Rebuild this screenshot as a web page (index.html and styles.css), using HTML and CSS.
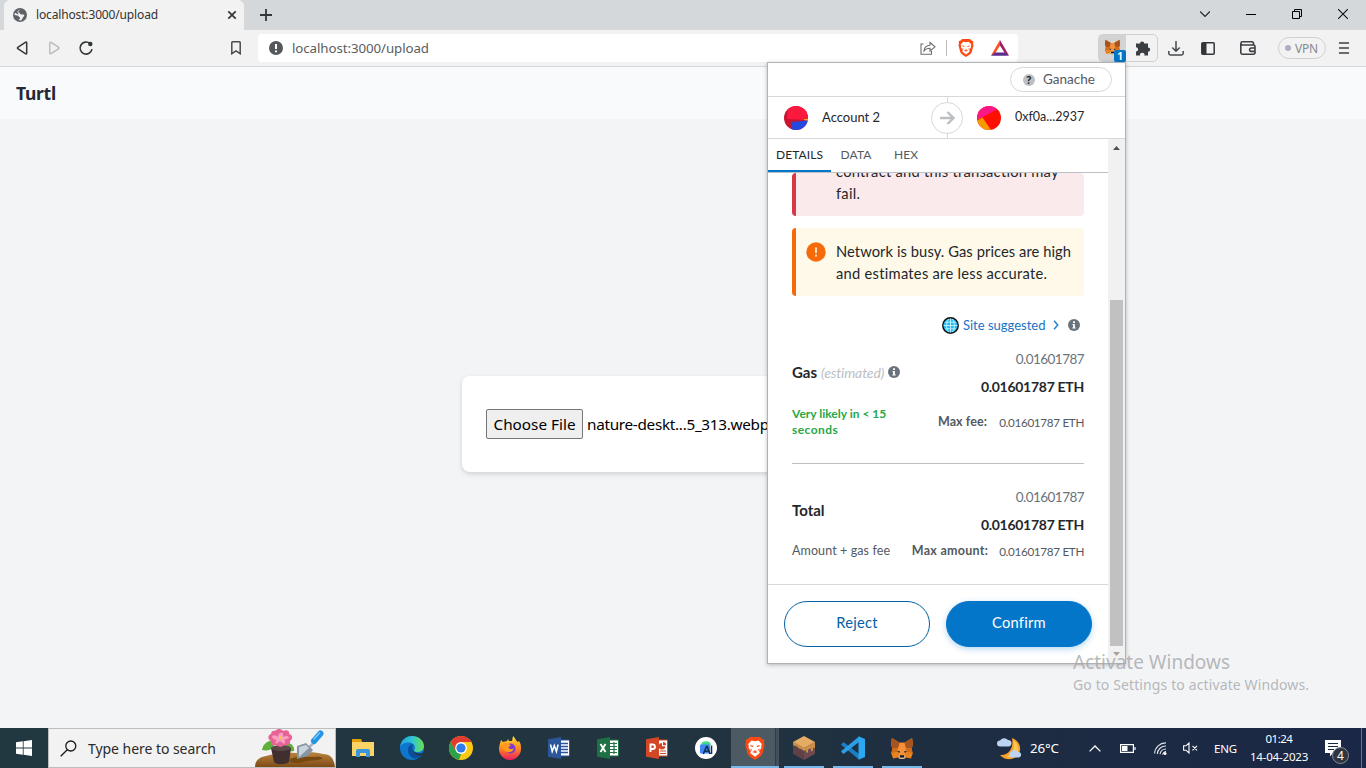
FILE: index.html
```html
<!DOCTYPE html>
<html lang="en">
<head>
<meta charset="utf-8">
<title>Turtl</title>
<link rel="stylesheet" href="styles.css">
</head>
<body>
<svg class="defs" width="0" height="0">
  <symbol id="fox" viewBox="0 0 24 24">
    <path fill="#e8821e" d="M1.500 1l8 5h5l8-5 .9 6-1.300 6 1.200 4-2 5.500-5-1.200-2 1.700H9.700l-2-1.700-5 1.200-2-5.500 1.200-4L.6 7z"/>
    <path fill="#a85420" d="M1.500 1L9.800 6 8 11.500l-6 .8L.6 7zM22.500 1l-8.300 5L16 11.500l6 .8L23.400 7z"/>
    <path fill="#f4903a" d="M9.500 6h5l1.500 6-1 7H9l-1-7z"/>
    <path fill="#d66b16" d="M2 12.300l6-.8-1.300 3.800-5.700 1.500zM22 12.300l-6-.8 1.300 3.800 5.700 1.500z"/>
    <path fill="#233447" d="M6.500 14.500l3.500.3-1 1.900zM17.500 14.500l-3.500.3 1 1.900z"/>
    <path fill="#d7c1b3" d="M8 20l1.800-.7h4.400L16 20l-1.600 2.700H9.700z"/>
    <path fill="#1c1614" d="M10 19h4l.5 2.300h-5z"/>
  </symbol>
  <symbol id="lion" viewBox="0 0 20 23">
    <path fill="#fb4a14" d="M5 0h10l2 2 2.300.8L19 6l.6 2-2.300 9-2.300 2.800L10 23l-5-3.200L2.700 17 .4 8 1 6 .7 2.800 3 2z"/>
    <path fill="#fff" d="M6.500 3.600l3.500.6 3.500-.6 3.300 3.500-.6 1.900.2 2-2.400 3 .8 2L10 19.800 5.200 16l.8-2-2.400-3 .2-2-.6-1.900z"/>
    <path fill="#fb4a14" d="M4.800 8.200l3.700.6-.5 1.200-2.200-.4zM15.200 8.200l-3.700.6.5 1.200 2.200-.4zM8.700 13.500h2.600L10 14.800zM7 15l3-1 3 1-3 1zM5.500 11.500l1.500 1-1 1.500zM14.500 11.500l-1.500 1 1 1.500z"/>
  </symbol>
  <symbol id="info" viewBox="0 0 12 12">
    <circle cx="6" cy="6" r="6" fill="#6a737d"/><path fill="#fff" d="M5.100 2.300h1.900v1.700H5.100zM4.500 4.900h2.400v3.500h.8v1H4.300v-1h.8V5.900h-.6z"/>
  </symbol>
</svg>

<header class="tabstrip">
  <div class="tab">
    <svg width="14" height="14" viewBox="0 0 14 14"><circle cx="7" cy="7" r="7" fill="#5f6368"/><path fill="#f2f2f2" d="M7.500 1.500c-1 .7-2.200 1-2.200 2.200 0 1 1.500.8 1.700 1.700.2 1 1.200 1.100 2.500 1.100 1.200 0 2 .3 1.700 1.300-.4 1.200-1.600 1.500-1.700 2.700L8 12.400c-1 .1-2-.1-2.400-.3.300-.8 1.600-.7 1.600-1.800 0-1-1-1-1.400-1.800C5.300 7.300 3.700 7.600 1.500 7c0-.8.100-1.500.4-2 1.700.2 2 1.200 3.300 1.200.6 0 .4-.7-.2-1.300-.8-.8-.7-2.200 1-2.900z"/></svg>
    <span class="tab-title">localhost:3000/upload</span>
    <svg class="tab-close" width="10" height="10" viewBox="0 0 10 10"><path d="M1.300 1.300l7.400 7.400M8.700 1.300L1.300 8.700" stroke="#333638" stroke-width="1.700"/></svg>
  </div>
  <svg class="plus" width="12" height="12" viewBox="0 0 12 12"><path d="M6 0v12M0 6h12" stroke="#333638" stroke-width="1.800"/></svg>
  <div class="winctl">
    <svg width="10" height="10" viewBox="0 0 10 10"><path d="M0 2.500l5 5 5-5" fill="none" stroke="#222" stroke-width="1.200"/></svg>
    <svg width="10" height="10" viewBox="0 0 10 10"><path d="M0 5.500h10" stroke="#000"/></svg>
    <svg width="10" height="10" viewBox="0 0 10 10"><path d="M.5 2.500h7v7h-7zM2.500 2.500v-2h7v7h-2" fill="none" stroke="#000"/></svg>
    <svg width="10" height="10" viewBox="0 0 10 10"><path d="M0 0l10 10M10 0L0 10" stroke="#111" stroke-width="1.100"/></svg>
  </div>
</header>

<nav class="toolbar">
  <div class="navbtns">
    <svg width="16" height="16" viewBox="0 0 16 16"><path d="M12.700 2.800v10.400a.7.7 0 0 1-1 .6L3.800 8.600a.7.7 0 0 1 0-1.200l7.900-5.200a.7.7 0 0 1 1 .6z" fill="none" stroke="#333638" stroke-width="1.500"/></svg>
    <svg width="16" height="16" viewBox="0 0 16 16"><path d="M3.800 2.800v10.400a.7.7 0 0 0 1 .6l7.900-5.200a.7.7 0 0 0 0-1.200L4.800 2.200a.7.7 0 0 0-1 .6z" fill="none" stroke="#b9babc" stroke-width="1.400"/></svg>
    <svg width="16" height="16" viewBox="0 0 16 16"><path d="M12 3.500A6 6 0 1 0 14 9.200" fill="none" stroke="#333638" stroke-width="1.600"/><circle cx="12.300" cy="4" r="2.200" fill="#333638"/></svg>
  </div>
  <svg class="bookmark" width="10" height="14" viewBox="0 0 10 14"><path d="M.8 1.500a.7.700 0 0 1 .7-.7h7a.7.700 0 0 1 .7.700v11.200L5 9.800.8 12.700z" fill="none" stroke="#4a4d50" stroke-width="1.500"/></svg>
  <div class="omnibox">
    <svg width="14" height="14" viewBox="0 0 14 14"><circle cx="7" cy="7" r="7" fill="#55595e"/><path d="M7 3v5M7 9.400v1.800" stroke="#fff" stroke-width="2"/></svg>
    <span class="url">localhost:3000/upload</span>
    <svg class="share" width="16" height="14" viewBox="0 0 16 14"><path d="M3.500 3H1v10.300h10.500V10M4 10c.3-3.500 2.500-5.700 6-5.800V1.500L15 5.800l-5 4.200V7.300C7.500 7.300 5.500 8 4 10z" fill="none" stroke="#6b6e72" stroke-width="1.100"/></svg>
    <i class="sep"></i>
    <svg class="brave" width="16" height="18"><use href="#lion"/></svg>
    <svg width="18" height="16" viewBox="0 0 18 16"><path fill="#ff4f1c" d="M9 0v5.500L4 13.500 0 15.500z"/><path fill="#9e1f63" d="M9 0l9 15.500-4-2L9 5.500z"/><path fill="#5b2d90" d="M0 15.700l4-3.200h10l4 3.200z"/></svg>
  </div>
  <div class="exts">
    <div class="ext on"><svg width="17" height="16"><use href="#fox"/></svg><b class="badge">1</b></div>
    <div class="ext"><svg width="16" height="16" viewBox="0 0 16 16"><path fill="#3a3d41" d="M1 3.500h4a2.100 2.100 0 1 1 4.200 0h3.800v3.900a2.200 2.200 0 1 1 0 4.400v3.700H9.400a2.200 2.200 0 1 0-4.300 0H1v-4a2.100 2.100 0 1 0 0-4.200z"/></svg></div>
  </div>
  <svg class="dl" width="16" height="15" viewBox="0 0 16 15"><path d="M8 0v10M4.300 6.500L8 10.200l3.700-3.700M.8 10v2.300a1.700 1.700 0 0 0 1.700 1.700h11a1.700 1.700 0 0 0 1.700-1.700V10" fill="none" stroke="#45484c" stroke-width="1.500"/></svg>
  <svg class="side" width="14" height="13" viewBox="0 0 14 13"><rect x=".8" y=".8" width="12.400" height="11.400" rx="1" fill="none" stroke="#333638" stroke-width="1.500"/><path fill="#333638" d="M1 1h4.500v11H1z"/></svg>
  <svg class="wallet" width="16" height="14" viewBox="0 0 16 14"><path d="M13.500 3.800V2.500A1.700 1.700 0 0 0 11.800.8H2.500a1.600 1.600 0 0 0 0 3.200h11A1.500 1.500 0 0 1 15 5.500v6.200a1.500 1.500 0 0 1-1.500 1.500H2.500A1.600 1.600 0 0 1 .8 11.600V2.500M15 7h-3.700a1.700 1.700 0 0 0 0 3.400H15" fill="none" stroke="#3c3f43" stroke-width="1.600"/></svg>
  <div class="vpn"><i></i><span>VPN</span></div>
  <svg class="menu" width="10" height="12" viewBox="0 0 10 12"><path d="M0 1h10M0 6h10M0 11h10" stroke="#3c3f43" stroke-width="1.600"/></svg>
</nav>

<main class="page">
  <div class="brand">Turtl</div>
  <section class="card">
    <button class="choose">Choose File</button>
    <span class="filename">nature-deskt...5_313.webp</span>
  </section>
</main>

<aside class="popup">
  <div class="network">
    <div class="pill"><svg width="12" height="12" viewBox="0 0 12 12"><circle cx="6" cy="6" r="6" fill="#bbc0c5"/></svg><b>?</b><span>Ganache</span></div>
  </div>
  <div class="parties">
    <svg width="24" height="24" viewBox="0 0 24 24"><clipPath id="c"><circle cx="12" cy="12" r="12"/></clipPath><g clip-path="url(#c)"><path fill="#c8142f" d="M0 0h24v24H0z"/><path fill="#fc1940" d="M4 0h20v14L3 13z"/><path fill="#f3c20c" d="M19 13.500l5-.8v2.500z"/><path fill="#2448e0" d="M7 16l17-1.500V24H8z"/></g></svg>
    <span class="from">Account 2</span>
    <div class="arrow"><svg width="15" height="14" viewBox="0 0 15 14"><path d="M0 7h13M7.500 1l6 6-6 6" fill="none" stroke="#bbc0c5" stroke-width="2.400"/></svg></div>
    <svg width="24" height="24" viewBox="0 0 24 24"><g clip-path="url(#c)"><path fill="#ff0f00" d="M0 0h24v24H0z"/><path fill="#fb1886" d="M0 0h20l-1 4L0 14z"/><path fill="#f59a00" d="M0 14.500l5.500-3L14 24H0z"/></g></svg>
    <span class="to">0xf0a...2937</span>
  </div>
  <div class="body">
    <div class="column">
      <div class="tabs">
        <span class="active">DETAILS</span>
        <span>DATA</span>
        <span>HEX</span>
      </div>
      <div class="content">
        <div class="alert danger"><p>contract and this transaction may<br>fail.</p></div>
        <div class="alert warn">
          <svg width="20" height="20" viewBox="0 0 20 20"><circle cx="10" cy="10" r="9.700" fill="#f66a0a"/><path d="M10 5.500v5.500M10 12.500v2" stroke="#fff" stroke-width="1.500"/></svg>
          <p>Network is busy. Gas prices are high<br><span class="second">and estimates are less accurate.</span></p>
        </div>
        <div class="site">
          <svg width="17" height="17" viewBox="0 0 17 17"><circle cx="8.500" cy="8.500" r="7.700" fill="#25bdf2" stroke="#111" stroke-width="1.500"/><path d="M1.500 8.500h14M8.500 1.500v14M3 5.200h11M3 11.800h11M6.500 2c-2.500 4-2.500 9 0 13M10.500 2c2.500 4 2.500 9 0 13" fill="none" stroke="#d5f5ff" stroke-width=".8"/></svg>
          <span>Site suggested</span>
          <svg class="chev" width="6" height="10" viewBox="0 0 6 10"><path d="M1 .8L4.800 5 1 9.200" fill="none" stroke="#1a7fd0" stroke-width="1.400"/></svg>
          <svg width="12" height="12"><use href="#info"/></svg>
        </div>
        <div class="row">
          <div class="label"><b>Gas</b><em>(estimated)</em><svg width="12" height="12"><use href="#info"/></svg></div>
          <div class="values"><span>0.01601787</span><b>0.01601787 ETH</b></div>
        </div>
        <div class="sub">
          <div class="likely">Very likely in &lt; 15<br><span>seconds</span></div>
          <div class="max"><b>Max fee:</b><span>0.01601787 ETH</span></div>
        </div>
        <hr>
        <div class="row total">
          <div class="label"><b>Total</b></div>
          <div class="values"><span>0.01601787</span><b>0.01601787 ETH</b></div>
        </div>
        <div class="sub last">
          <div class="note">Amount + gas fee</div>
          <div class="max amount"><b>Max amount:</b><span>0.01601787 ETH</span></div>
        </div>
      </div>
      <footer class="actions">
        <button class="reject">Reject</button>
        <button class="confirm">Confirm</button>
      </footer>
    </div>
    <div class="scroll"><svg width="7" height="4" viewBox="0 0 7 4"><path d="M0 4l3.500-4L7 4z" fill="#505050"/></svg><i></i><svg width="7" height="4" viewBox="0 0 7 4"><path d="M0 0l3.500 4L7 0z" fill="#a3a3a3"/></svg></div>
  </div>
</aside>

<div class="watermark"><h2>Activate Windows</h2><p>Go to Settings to activate Windows.</p></div>

<footer class="taskbar">
  <div class="start"><svg width="16" height="16" viewBox="0 0 16 16"><path fill="#fff" d="M0 2.200L6.800 1.300v6.300H0zM7.600 1.200L16 0v7.600H7.600zM0 8.400h6.800v6.300L0 13.800zM7.600 8.400H16V16l-8.400-1.200z"/></svg></div>
  <div class="search">
    <svg width="17" height="17" viewBox="0 0 17 17"><circle cx="10.800" cy="6" r="5" fill="none" stroke="#1b1b1b" stroke-width="1.300"/><path d="M7.300 9.700L.7 16.300" stroke="#1b1b1b" stroke-width="1.300"/></svg>
    <span>Type here to search</span>
    <svg class="garden" width="80" height="38" viewBox="0 0 80 38">
      <defs><linearGradient id="soil" x2="0" y2="1"><stop stop-color="#bb8440"/><stop offset="1" stop-color="#7d4b16"/></linearGradient></defs>
      <path fill="url(#soil)" d="M0 38c0-6 4-10 11-11 8-3 20-4 30-3 12-1 20-1 27 1 8 0 11 5 12 13z"/>
      <path fill="#77490f" d="M35 30c7-3 14-3 20-2 5 0 10-1 13 1-4 3-10 2-15 3-7 2-13 3-18 1z"/>
      <path fill="#5fb03a" d="M7 21c1-6 5-9 11-10 3 6-1 12-11 10zM30 14c6-1 10 4 9 8-6 1-10-1-9-8z"/>
      <path fill="#3f302f" d="M16 19h20l-2 14c-4 3-12 3-15 0z"/><ellipse cx="26" cy="19" rx="10" ry="3" fill="#5b4746"/>
      <path fill="#ea6398" d="M20 2c3-3 7-2 8 0 4-2 7 0 6 3 4 1 4 5 1 7 1 4-4 5-6 4-2 3-6 2-7 0-4 1-7 0-6-4-4-2-3-6 0-7 0-2 2-4 4-3z"/><path fill="#f8a0c0" d="M17 7c3-1 5 0 6 1 0-3 2-5 5-4l0 4c3-2 6-1 6 1l-5 2c2 1 1 3 0 4l-4-3-4 3c-1-2 0-3 1-4-3 0-5-2-5-4z"/><circle cx="25.500" cy="9" r="1.800" fill="#f5c25a"/>
      <path d="M52 20l10-9" stroke="#a9b6c1" stroke-width="2.500"/><path fill="#8796a2" d="M42 17l9-3 7 7-5 6-11 3z"/><path fill="#c8d3dc" d="M44 18l7-2 3 3-10 9z"/>
      <path d="M59 12L65.500 4.500" stroke="#2494e4" stroke-width="6" stroke-linecap="round"/><path d="M59 10L64.500 4" stroke="#7fc9fa" stroke-width="1.500" stroke-linecap="round"/>
    </svg>
  </div>
  <div class="apps">
    <div class="app"><svg width="22" height="20" viewBox="0 0 22 20"><path fill="#e3a008" d="M0 1h9l1 2v4H0z"/><path fill="#fcd365" d="M0 4h22v14H0z"/><path fill="#3a96dd" d="M4 19v-6a2 2 0 0 1 2-2h10a2 2 0 0 1 2 2v6h-4v-4H8v4z"/></svg></div>
    <div class="app"><svg width="24" height="24" viewBox="0 0 24 24"><defs><linearGradient id="e1"><stop stop-color="#1ca3e0"/><stop offset=".5" stop-color="#30c5d2"/><stop offset="1" stop-color="#6be04f"/></linearGradient></defs><circle cx="12" cy="12" r="12" fill="#0f76cf"/><path fill="#0b4f9c" d="M8 14c0-4 3-6 5-6-2 3-1 9 8 10 1 0 2-.5 1 1-4 6-14 4-14-5z"/><path fill="url(#e1)" d="M0 11C1 4 6 0 12 0c7 0 12 5 12 10 0 4-3 6-7 6-2 0-3-.6-3-1.500 0-.8 1-1.300 1-3C15 8.500 12 6.500 9 6.500c-5 0-8 2-9 4.500z"/><path fill="#223640" d="M13.500 14.500c1 3 5 4 11 1.500l-2.200 3.500c-4 .5-9-1-8.800-5z"/></svg></div>
    <div class="app"><svg width="24" height="24" viewBox="0 0 24 24"><circle cx="12" cy="12" r="12" fill="#f9c913"/><path fill="#2ca14b" d="M1.600 6L7 15l5 3-2 5.800A12 12 0 0 1 1.600 6z"/><path fill="#e33b2e" d="M1.600 6A12 12 0 0 1 22.400 6H12l-5.200 9z"/><circle cx="12" cy="12" r="5.900" fill="#fff"/><circle cx="12" cy="12" r="4.600" fill="#2f7bea"/></svg></div>
    <div class="app"><svg width="24" height="24" viewBox="0 0 24 24"><defs><linearGradient id="ff" x2="0" y2="1"><stop stop-color="#ffe03a"/><stop offset=".5" stop-color="#ff8a1d"/><stop offset="1" stop-color="#ee1d62"/></linearGradient></defs><path fill="url(#ff)" d="M3 4l2 2 4-1 1-2 1 2 3 0 1-5c3 3 3 5 5 6l1-1c2 3 2 5 2 8 0 6-5 11-11 11S1 19 1 13c0-4 1-5 2-9z"/><circle cx="12.500" cy="12.500" r="5" fill="#7b3ad0"/><path fill="#ff9c1b" d="M5 8c4-2 7 0 8 2-3 0-3 2-1 3 2 0 3 0 4-1-1 5-8 6-11 1z"/></svg></div>
    <div class="app"><svg width="22" height="22" viewBox="0 0 22 22"><path fill="#fff" stroke="#2b579a" d="M11 3h10.500v16H11z"/><path d="M13 6.500h7M13 9.500h7M13 12.500h7M13 15.500h7" stroke="#2b579a" stroke-width="1.300"/><path fill="#2b579a" d="M0 2.200L13 0v22L0 19.800z"/><path d="M2.500 7.500l1.700 7 2.100-6 2.100 6 1.700-7" fill="none" stroke="#fff" stroke-width="1.500"/></svg></div>
    <div class="app"><svg width="22" height="22" viewBox="0 0 22 22"><path fill="#fff" stroke="#217346" d="M11 3h10.500v16H11z"/><path d="M13 6.500h7M13 9.500h7M13 12.500h7M13 15.500h7M17 5v12" stroke="#217346" stroke-width="1.200"/><path fill="#1e7145" d="M0 2.200L13 0v22L0 19.800z"/><path d="M3.500 7l5 8M8.500 7l-5 8" fill="none" stroke="#fff" stroke-width="1.900"/></svg></div>
    <div class="app"><svg width="22" height="22" viewBox="0 0 22 22"><path fill="#fff" stroke="#d24726" d="M11 3h10.500v16H11z"/><path d="M14 14h6M14 16.500h6" stroke="#d24726" stroke-width="1.200"/><path fill="#d24726" d="M16 6a3.200 3.200 0 1 0 3.200 3.200H16zM17 5v3.200h3.200A3.200 3.200 0 0 0 17 5z"/><path fill="#d24726" d="M0 2.200L13 0v22L0 19.800z"/><path d="M4.500 15V7.500h2.200a2.200 2.200 0 0 1 0 4.500H4.500" fill="none" stroke="#fff" stroke-width="1.900"/></svg></div>
    <div class="app"><svg width="22" height="22" viewBox="0 0 22 22"><circle cx="11" cy="11" r="11" fill="#fff"/><path fill="#3ddc84" d="M6 8C6.500 5.200 8.500 4.300 11 4.300s4.500.9 5 3.700z"/><rect x="5" y="7.500" width="10" height="9" rx="1" fill="#4285f4"/><path d="M8.300 17l3.200-7.500h.7l2.800 7.500M9.500 14.200h4.500M16.500 8.500V17" fill="none" stroke="#0b3355" stroke-width="1.600"/></svg></div>
    <div class="app current"><svg width="20" height="23"><use href="#lion"/></svg></div>
    <div class="app open"><svg width="22" height="24" viewBox="0 0 22 24"><path fill="#5e4146" d="M0 6l11 6v12L0 18z"/><path fill="#6d4a4e" d="M22 6l-11 6v12l11-6z"/><path fill="#c98e48" d="M0 6l11 6 11-6v6.500l-2-1v3l-2 1v-3l-3 1v3.500l-2-1v-2l-2 1-3-2-3-1v-1l-5-2z"/><path fill="#e5ab63" d="M11 0l11 6-11 6L0 6z"/></svg></div>
    <div class="app open"><svg width="24" height="24" viewBox="0 0 24 24"><path fill="#1a7fc4" d="M0 8.500L2.500 6 18 18v5.500L1 9.500z"/><path fill="#2a9fe8" d="M0 15.500L2.500 18 18 6V.5L1 14.500z"/><path fill="#2aa8f2" d="M17.500.2L24 3v18l-6.500 2.800z"/></svg></div>
    <div class="app open"><svg width="24" height="23"><use href="#fox"/></svg></div>
  </div>
  <div class="tray">
    <svg class="weather" width="25" height="23" viewBox="0 0 25 23"><path fill="#f5a02c" d="M15 1c8 3 11 12 5 18-5 5-13 4-17-1 8 1 14-6 12-17z"/><path fill="#ffc94d" d="M16 3c6 4 7 11 3 15-3 2-7 3-10 2 7-3 9-9 7-17z"/><path fill="#bcd3f2" d="M3 9.500a3 3 0 0 1 0-6A5 5 0 0 1 11 3a3.300 3.300 0 0 1 1 6.500zM14 20.500a3 3 0 0 1 0-5.500 4 4 0 0 1 7 0 2.800 2.800 0 0 1 1 5.500z"/></svg>
    <span class="temp">26°C</span>
    <svg class="up" width="12" height="7" viewBox="0 0 12 7"><path d="M.6 6.400L6 1l5.400 5.400" fill="none" stroke="#fff" stroke-width="1.300"/></svg>
    <svg class="bat" width="16" height="9" viewBox="0 0 16 9"><path d="M.6.6h12.800v7.800H.6zM15 3v3" fill="none" stroke="#fff" stroke-width="1.200"/><path fill="#fff" d="M2 2h5.500v5H2z"/></svg>
    <svg class="wifi" width="13" height="13" viewBox="0 0 13 13"><g fill="none" stroke="#dfe4ec" stroke-width="1.100"><path d="M.6 11.500A11 11 0 0 1 12 .9M3.300 12A8.500 8.500 0 0 1 12 4M6 12.300A6 6 0 0 1 12 7"/></g><circle cx="11" cy="11.500" r="1.500" fill="#fff"/><path d="M8.500 12.500A4 4 0 0 1 12 9.500" fill="none" stroke="#fff"/></svg>
    <svg class="snd" width="15" height="12" viewBox="0 0 15 12"><path d="M.6 3.800h2.300L6 1v10L2.900 8.200H.6zM9.500 3.800L14 8.300M14 3.800L9.500 8.300" fill="none" stroke="#fff" stroke-width="1.100"/></svg>
    <span class="lang">ENG</span>
    <div class="clock"><span class="time">01:24</span><span class="date">14-04-2023</span></div>
    <div class="notif"><svg width="16" height="17" viewBox="0 0 16 17"><path fill="#fff" d="M0 0h16v13H8l-3 3.500V13H0z"/><path d="M3 3.500h10M3 6.500h10M3 9.500h6" stroke="#1b2845"/></svg><b>4</b></div>
  </div>
</footer>
</body>
</html>
```

FILE: styles.css
```css
* { box-sizing: border-box; }
body { margin: 0; width: 1366px; height: 768px; overflow: hidden; display: flex; flex-direction: column; position: relative; font-family: "Noto Sans", sans-serif; color: #202124; white-space: nowrap; }
svg { display: block; flex: none; }
p, h2 { margin: 0; font-weight: 400; }
button { font: inherit; padding: 0; margin: 0; }
.defs { position: absolute; }

/* browser tab strip */
.tabstrip { flex: none; height: 30px; background: #d5d8db; display: flex; align-items: center; }
.tab { width: 240px; height: 30px; margin-left: 4px; padding: 0 7px 0 9px; background: #f2f2f2; border-radius: 6px 6px 0 0; display: flex; align-items: center; }
.tab-title { margin: -1px 0 0 9px; font-size: 12px; letter-spacing: -.15px; color: #333; }
.tab-close { margin-left: auto; }
.plus { margin-left: 16px; }
.winctl { margin-left: auto; display: flex; align-items: center; gap: 36px; padding: 0 18px 2px 0; }

/* browser toolbar */
.toolbar { flex: none; height: 37px; background: #f2f2f2; border-bottom: 1px solid #d4d6d9; display: flex; align-items: center; }
.navbtns { display: flex; gap: 16px; margin-left: 14px; }
.bookmark { margin-left: 137px; }
.omnibox { width: 760px; height: 28px; margin-left: 17px; padding: 0 9px 0 11px; border-radius: 4px; background: #fff; display: flex; align-items: center; }
.url { margin: -1px 0 0 9px; font-size: 13.300px; letter-spacing: -.08px; color: #5a5d61; }
.share { margin-left: auto; }
.sep { width: 1px; height: 16px; margin: 0 11px 0 11px; background: #bbb; }
.brave { margin-right: 17px; }
.share { position: relative; left: 1px; }
.exts { width: 60px; height: 28px; margin-left: 80px; border: 1px solid #cfd0d2; border-radius: 5px; display: flex; }
.ext { position: relative; flex: 1; display: flex; align-items: center; justify-content: center; padding-left: 3px; }
.ext.on { flex: 0 0 27px; background: #d3d3d4; padding: 0 1px 2px 0; }
.badge { position: absolute; right: 0; bottom: -1px; width: 12px; height: 12px; border-radius: 2px; background: #0376c9; color: #fff; font: bold 10px/12px "Noto Sans", sans-serif; text-align: center; }
.dl { margin-left: 10px; }
.side { margin-left: 17px; }
.wallet { margin-left: 25px; }
.vpn { width: 48px; height: 22px; margin-left: 22px; padding-left: 6px; border: 1px solid #d0d1d4; border-radius: 11px; display: flex; align-items: center; gap: 4px; font-size: 12px; letter-spacing: -.2px; color: #868a92; }
.vpn i { width: 6px; height: 6px; border-radius: 50%; background: #adaec4; }
.menu { margin-left: 13px; }

/* web page */
.page { flex: 1; background: #f3f4f6; }
.brand { height: 52px; padding: 0 16px; background: #f9fafb; display: flex; align-items: center; font-size: 17.500px; letter-spacing: -.27px; font-weight: 700; color: #1f2937; }
.card { width: 448px; height: 96px; margin: 257px 0 0 462px; padding-left: 24px; background: #fff; border-radius: 8px; box-shadow: 0 2px 5px rgba(0,0,0,.14); display: flex; align-items: center; font-size: 15.300px; color: #000; }
.choose { width: 97px; height: 30px; background: #efefef; border: 1px solid #767676; border-radius: 2px; color: #000; letter-spacing: 0; }
.filename { margin-left: 4px; letter-spacing: -.3px; }

/* wallet popup */
.popup { position: absolute; left: 767px; top: 62px; width: 359px; height: 602px; border: 1px solid #b0b2b5; background: #fff; box-shadow: 0 1px 4px rgba(0,0,0,.25); display: flex; flex-direction: column; font-family: Lato, sans-serif; color: #24272a; }
.network { height: 34px; border-bottom: 1px solid #d6d9dc; padding: 4px 13px 0 0; display: flex; justify-content: flex-end; }
.pill { width: 102px; height: 25px; border: 1px solid #d6d9dc; border-radius: 13px; padding-left: 12px; display: flex; align-items: center; font-size: 13.500px; color: #535a61; }
.pill span { margin-top: -2px; }
.pill b { width: 12px; margin: 0 8px 0 -12px; text-align: center; position: relative; font: bold 10px "Open Sans", sans-serif; color: #24272a; }
.parties { height: 42px; border-bottom: 1px solid #d6d9dc; padding-left: 16px; display: flex; align-items: center; font-size: 13px; }
.from, .to { padding-bottom: 2px; }
.from { margin-left: 14px; }
.arrow { width: 32px; height: 32px; margin: 0 14px 0 auto; border: 1px solid #d6d9dc; border-radius: 50%; display: flex; align-items: center; justify-content: center; position: relative; }
.arrow::before, .arrow::after { content: ""; position: absolute; left: 15px; width: 1px; height: 5px; background: #d6d9dc; }
.arrow::before { top: -6px; }
.arrow::after { bottom: -6px; }
.to { width: 70px; margin: 0 40px 0 14px; font-size: 12.500px; }
.body { flex: 1; display: flex; }
.column { width: 340px; display: flex; flex-direction: column; }
.tabs { height: 34px; border-bottom: 1px solid #bbc0c5; display: flex; font-size: 12px; letter-spacing: .08px; color: #535a61; }
.tabs > span { width: 50px; height: 33px; padding-bottom: 2px; display: flex; align-items: center; justify-content: center; }
.tabs > .active { width: 63px; padding: 0; border-bottom: 2px solid #0376c9; color: #24272a; }
.content { height: 411px; padding: 0 24px; overflow: hidden; }
.alert { border-left: 4px solid; border-radius: 4px; padding: 12px 0 12px 40px; font-size: 14.700px; line-height: 22px; }
.alert p { color: #24272a; letter-spacing: .08px; }
.alert .second { letter-spacing: .27px; }
.danger { height: 43px; padding-top: 0; border-color: #d73847; background: #fbeaeb; overflow: hidden; }
.danger p { margin-top: -13px; letter-spacing: .26px; }
.warn { height: 68px; margin-top: 12px; padding-left: 10px; border-color: #f66a0a; background: #fef9e9; display: flex; gap: 10px; }
.warn svg { margin-top: 2px; }
.site { height: 18px; margin-top: 20px; padding-right: 4px; display: flex; align-items: center; justify-content: flex-end; font-size: 13px; color: #1a72c4; }
.site span { width: 83px; margin: -1px 7px 0 4px; }
.chev { margin-right: 9px; }
.row { height: 56px; margin-top: 11px; display: flex; justify-content: space-between; align-items: center; font-size: 14px; }
.label { display: flex; align-items: center; gap: 4px; padding-bottom: 2px; }
.label b { font-size: 15px; }
.label em { font-size: 14px; letter-spacing: -.12px; color: #bbc0c5; }
.values { display: flex; flex-direction: column; align-items: flex-end; line-height: 28px; }
.values span { font-size: 13.500px; letter-spacing: -.55px; color: #6a737d; }
.values b { letter-spacing: -.28px; }
.sub { height: 42px; display: flex; justify-content: space-between; align-items: center; font-size: 12px; line-height: 16px; color: #535a61; }
.likely { padding-bottom: 1px; font-weight: 700; color: #28a745; }
.likely span { letter-spacing: .44px; }
.max { display: flex; gap: 12px; }
.max b { font-size: 12.500px; letter-spacing: .1px; }
.amount b { letter-spacing: .26px; }
.amount { gap: 11px; }
.max span { font-size: 11.700px; letter-spacing: -.32px; }
.note { font-size: 12.500px; letter-spacing: .1px; }
hr { margin: 20px 0 0; border: 0; height: 1px; background: #bbc0c5; }
.row.total { margin-top: 19px; }
.sub.last { height: 24px; }
.actions { flex: 1; border-top: 1px solid #d6d9dc; padding: 16px; display: flex; gap: 16px; }
.actions button { width: 146px; height: 46px; border-radius: 23px; border: 1px solid #0260a4; font-size: 14.700px; letter-spacing: .25px; padding-bottom: 4px; }
.actions .reject { background: #fff; color: #0260a4; }
.actions .confirm { background: #0376c9; border-color: #0376c9; color: #fff; box-shadow: 0 2px 6px rgba(3,118,201,.3); }
.scroll { width: 17px; background: #f1f1f1; display: flex; flex-direction: column; align-items: center; padding: 7px 0 7px; }
.scroll i { width: 13px; height: 346px; margin: auto 0 6px; background: #c1c1c1; }

.watermark { position: absolute; left: 1073px; top: 650px; color: rgba(165,167,170,.8); }
.watermark h2 { font-size: 19px; line-height: 24px; }
.watermark p { font-size: 14px; line-height: 21px; letter-spacing: .12px; }

/* desktop taskbar */
.taskbar { flex: none; height: 40px; background: linear-gradient(90deg, #213841, #22343f 50%, #1d2c42 75%, #1a2746); display: flex; align-items: center; color: #fff; }
.start { width: 48px; display: flex; justify-content: center; }
.search { width: 288px; height: 40px; border: 1px solid #bdbec0; background: #f2f2f2; padding-left: 11px; display: flex; align-items: center; font-size: 14px; letter-spacing: -.05px; color: #2b2b2b; }
.search span { margin-left: 11px; }
.garden { margin-left: auto; }
.apps { display: flex; gap: 1px; margin-left: 3px; }
.app { width: 48px; height: 40px; display: flex; align-items: center; justify-content: center; }
.open { background: linear-gradient(#76b9ed, #76b9ed) 4px 38px / 40px 2px no-repeat; }
.current { background: #4c5a64; border-bottom: 2px solid #76b9ed; box-shadow: inset -3px 0 #43505a, inset -4px 0 #2f3d47; padding-top: 2px; }
.tray { flex: 1; height: 40px; margin: 0 4px 0 71px; display: flex; align-items: center; font-size: 11.500px; border-right: 1px solid #69758a; }
.temp { width: 29px; margin: 0 30px 0 8px; font-size: 13.300px; letter-spacing: -.1px; }
.bat { margin-left: 19px; }
.wifi { margin-left: 18px; }
.snd { margin-left: 16px; }
.lang { width: 23px; margin-left: 16px; letter-spacing: -.2px; }
.clock { width: 60px; margin-left: 12px; display: flex; flex-direction: column; align-items: center; line-height: 18px; }
.time { letter-spacing: -.5px; }
.date { letter-spacing: -.19px; }
.notif { position: relative; margin-left: 16px; }
.notif b { position: absolute; left: 7px; top: 7px; width: 17px; height: 17px; border-radius: 50%; border: 1px solid #888d96; background: #30363f; font: 12px/15px "Noto Sans", sans-serif; text-align: center; }
```
